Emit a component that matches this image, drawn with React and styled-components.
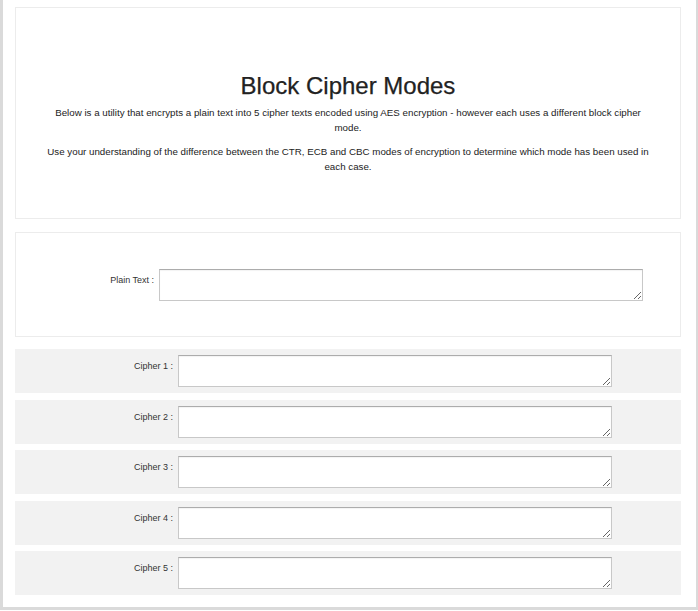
import React from "react";
import styled, { createGlobalStyle } from "styled-components";

const GlobalStyle = createGlobalStyle`
  html, body {
    margin: 0;
    padding: 0;
    background: #ffffff;
  }
  body {
    font-family: "Liberation Sans", Arial, Helvetica, sans-serif;
    color: #2b2b2b;
  }
  * { box-sizing: border-box; }
`;

const Frame = styled.div`
  width: 698px;
  border-left: 3px solid #dadada;
  border-right: 2px solid #dadada;
  border-bottom: 3px solid #dadada;
  padding: 7px 15px 12px 12px;
  display: flex;
  flex-direction: column;
`;

const IntroPanel = styled.section`
  height: 212px;
  border: 1px solid #ececec;
  padding: 64px 26px 0;
  text-align: center;
`;

const Title = styled.h1`
  margin: 0 0 5px;
  font-size: 24px;
  line-height: 28px;
  font-weight: 500;
  color: #222;
  -webkit-text-stroke: 0.25px #222;
`;

const Paragraph = styled.p`
  margin: 0 0 9px;
  font-size: 9.75px;
  line-height: 15px;
  color: #222;
`;

const InputPanel = styled.section`
  margin-top: 13px;
  height: 105px;
  border: 1px solid #ececec;
  display: flex;
  align-items: center;
`;

const CipherList = styled.div`
  margin-top: 12px;
  display: flex;
  flex-direction: column;
  gap: 6.5px;
`;

const CipherRow = styled.div`
  height: 44px;
  background: #f2f2f2;
  display: flex;
  align-items: center;
`;

const Field = styled.div`
  display: flex;
  align-items: flex-start;
  gap: 5px;
`;

const Label = styled.label`
  width: ${(p) => p.$width}px;
  padding-top: 6px;
  font-size: 9px;
  line-height: 11px;
  text-align: right;
  color: #333;
  flex-shrink: 0;
`;

const TextBox = styled.textarea`
  display: block;
  margin: 0;
  width: ${(p) => p.$width}px;
  height: 32px;
  padding: 2px;
  border: 1px solid #c8c8c8;
  border-top-color: #acacac;
  box-shadow: inset 0 1px 1px rgba(0, 0, 0, 0.05);
  background: #fff;
  font-family: "Liberation Sans", Arial, sans-serif;
  font-size: 11px;
  outline: none;
`;

const ciphers = [1, 2, 3, 4, 5];

export default function App() {
  return (
    <>
      <GlobalStyle />
      <Frame>
        <IntroPanel>
          <Title>Block Cipher Modes</Title>
          <Paragraph>
            Below is a utility that encrypts a plain text into 5 cipher texts encoded using AES
            encryption - however each uses a different block cipher mode.
          </Paragraph>
          <Paragraph>
            Use your understanding of the difference between the CTR, ECB and CBC modes of
            encryption to determine which mode has been used in each case.
          </Paragraph>
        </IntroPanel>
        <InputPanel>
          <Field>
            <Label $width={138} htmlFor="plain">Plain Text :</Label>
            <TextBox $width={484} id="plain" />
          </Field>
        </InputPanel>
        <CipherList>
          {ciphers.map((n) => (
            <CipherRow key={n}>
              <Field>
                <Label $width={158} htmlFor={`cipher${n}`}>Cipher {n} :</Label>
                <TextBox $width={434} id={`cipher${n}`} />
              </Field>
            </CipherRow>
          ))}
        </CipherList>
      </Frame>
    </>
  );
}
